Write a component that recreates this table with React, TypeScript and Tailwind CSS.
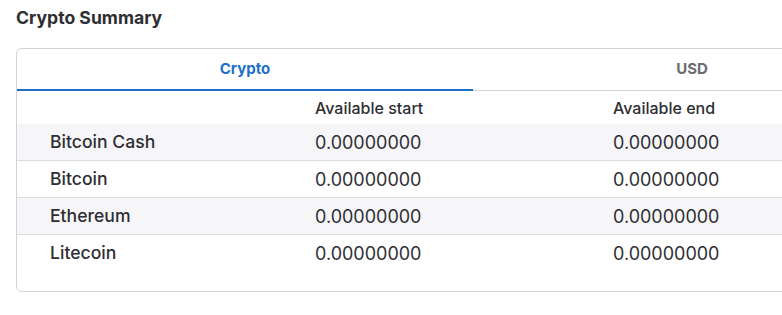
const rows = [
  { name: "Bitcoin Cash", start: "0.00000000", end: "0.00000000" },
  { name: "Bitcoin", start: "0.00000000", end: "0.00000000" },
  { name: "Ethereum", start: "0.00000000", end: "0.00000000" },
  { name: "Litecoin", start: "0.00000000", end: "0.00000000" },
];

export default function App() {
  return (
    <div className="h-[315px] w-[782px] overflow-hidden bg-white font-['Inter',sans-serif] text-[#2e2e33]">
      <h2 className="px-4 pt-[6px] text-[17.6px] font-bold leading-6">Crypto Summary</h2>

      <div className="ml-4 mt-[18px] w-[914px] rounded-md border border-[#d3d3d6] pb-[19px]">
        {/* tabs */}
        <div className="flex h-[42px] border-b border-[#d3d3d6]">
          <div className="relative flex w-[456px] items-center justify-center text-[15px] font-bold text-[#1e6fcc]">
            Crypto
            <span className="absolute -bottom-px left-0 right-0 h-[2px] bg-[#1e6fcc]" />
          </div>
          <div className="flex w-[438px] items-center justify-center text-[15px] font-bold text-[#6b6b70]">
            USD
          </div>
        </div>

        {/* header */}
        <div className="flex h-[33px] items-center text-[16px] font-medium">
          <div className="w-[298px]" />
          <div className="w-[298px]">Available start</div>
          <div className="w-[298px]">Available end</div>
        </div>

        {rows.map((r, i) => (
          <div
            key={r.name}
            className={`flex h-[37px] items-center text-[18px] ${i % 2 === 0 ? "bg-[#f6f6f8]" : "bg-white"} ${i < rows.length - 1 ? "border-b border-[#dcdce0]" : ""}`}
          >
            <div className="w-[298px] pl-[33px] text-[17.6px] font-medium">{r.name}</div>
            <div className="w-[298px]">{r.start}</div>
            <div className="w-[298px]">{r.end}</div>
          </div>
        ))}
      </div>
    </div>
  );
}
